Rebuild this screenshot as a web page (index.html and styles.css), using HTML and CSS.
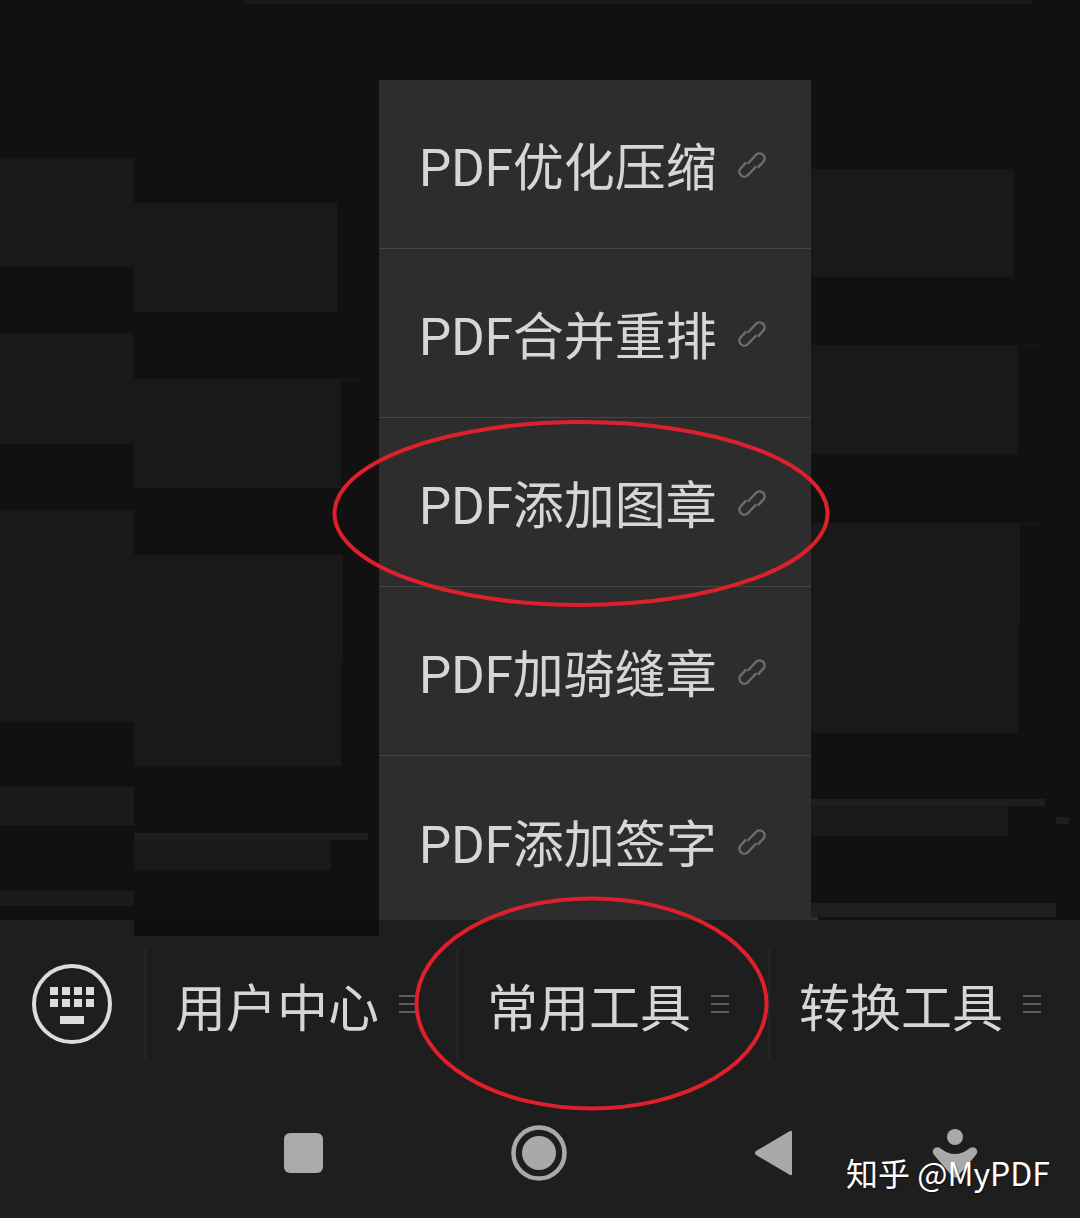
FILE: index.html
```html
<!DOCTYPE html>
<html lang="zh">
<head>
<meta charset="utf-8">
<title>MyPDF</title>
<link rel="stylesheet" href="styles.css">
</head>
<body>
<div class="screen">
  <main class="canvas">
    <svg class="ghost" width="1080" height="920" viewBox="0 0 1080 920" aria-hidden="true">
      <rect class="g" x="245" y="0" width="786" height="4"/>
      <rect class="g" x="0" y="158" width="134" height="109"/>
      <rect class="g" x="0" y="333" width="134" height="111"/>
      <rect class="g" x="0" y="510" width="134" height="212"/>
      <rect class="g2" x="0" y="787" width="134" height="38"/>
      <rect class="g2" x="0" y="891" width="134" height="15"/>
      <rect class="g" x="134" y="203" width="203" height="109"/>
      <rect class="g" x="134" y="379" width="207" height="109"/>
      <rect class="g" x="134" y="379" width="231" height="1"/>
      <rect class="g" x="134" y="555" width="209" height="105"/>
      <rect class="g" x="134" y="660" width="207" height="106"/>
      <rect class="g3" x="134" y="833" width="234" height="7"/>
      <rect class="g" x="134" y="840" width="197" height="30"/>
      <rect class="g" x="811" y="169" width="203" height="108"/>
      <rect class="g" x="811" y="345" width="207" height="109"/>
      <rect class="g" x="811" y="345" width="230" height="1"/>
      <rect class="g" x="811" y="523" width="209" height="105"/>
      <rect class="g" x="811" y="628" width="207" height="105"/>
      <rect class="g" x="811" y="523" width="234" height="1"/>
      <rect class="g3" x="811" y="799" width="234" height="7"/>
      <rect class="g" x="811" y="806" width="197" height="30"/>
      <rect class="g3" x="811" y="903" width="245" height="14"/>
      <rect class="g3" x="1056" y="817" width="13" height="7"/>
      <rect class="g4" x="811" y="917" width="7" height="3"/>
    </svg>
    <ul class="menu">
      <li class="menu-item"><span>PDF优化压缩</span><svg class="link" viewBox="0 0 28 28"><use href="#link-icon"/></svg></li>
      <li class="menu-item"><span>PDF合并重排</span><svg class="link" viewBox="0 0 28 28"><use href="#link-icon"/></svg></li>
      <li class="menu-item"><span>PDF添加图章</span><svg class="link" viewBox="0 0 28 28"><use href="#link-icon"/></svg></li>
      <li class="menu-item"><span>PDF加骑缝章</span><svg class="link" viewBox="0 0 28 28"><use href="#link-icon"/></svg></li>
      <li class="menu-item"><span>PDF添加签字</span><svg class="link" viewBox="0 0 28 28"><use href="#link-icon"/></svg></li>
    </ul>
  </main>
  <footer class="bar">
    <div class="shade"></div>
    <div class="tabs">
      <div class="kbd">
        <svg width="80" height="80" viewBox="0 0 80 80">
          <circle cx="40" cy="40" r="38" class="kbd-ring"/>
          <g class="kbd-keys">
            <rect x="18" y="23" width="8" height="8"/><rect x="30" y="23" width="8" height="8"/><rect x="42" y="23" width="8" height="8"/><rect x="54" y="23" width="8" height="8"/>
            <rect x="18" y="35" width="8" height="8"/><rect x="30" y="35" width="8" height="8"/><rect x="42" y="35" width="8" height="8"/><rect x="54" y="35" width="8" height="8"/>
            <rect x="28" y="52" width="24" height="8"/>
          </g>
        </svg>
      </div>
      <div class="tab"><span class="tab-label">用户中心</span><i class="burger"></i></div>
      <div class="tab"><span class="tab-label">常用工具</span><i class="burger"></i></div>
      <div class="tab"><span class="tab-label">转换工具</span><i class="burger"></i></div>
    </div>
    <nav class="nav">
      <i class="nav-square"></i>
      <svg class="nav-home" width="56" height="56" viewBox="0 0 56 56"><circle cx="28" cy="28" r="25.5" class="home-ring"/><circle cx="28" cy="28" r="17" class="nav-fill"/></svg>
      <svg class="nav-back" width="40" height="48" viewBox="0 0 40 48"><path class="nav-fill" d="M38 3 38 45Q38 47 36 46L2 26Q0 24 2 22L36 2Q38 1 38 3Z"/></svg>
    </nav>
    <svg class="person" width="46" height="50" viewBox="0 0 46 50"><circle cx="23" cy="8" r="8" class="nav-fill"/><path class="nav-fill" d="M1 21Q3 17 8 19Q23 31 38 19Q43 17 45 21Q46 24 43 27L26 47Q23 50 20 47L3 27Q0 24 1 21Z"/></svg>
    <div class="mark">知乎 @MyPDF</div>
  </footer>
  <svg class="ink" width="1080" height="1218" viewBox="0 0 1080 1218" aria-hidden="true">
    <ellipse cx="581" cy="513.5" rx="246.5" ry="91.5"/>
    <ellipse cx="591.5" cy="1003.5" rx="175" ry="105"/>
  </svg>
</div>
<div class="strip"></div>
<svg class="defs" width="0" height="0"><defs><g id="link-icon" transform="rotate(43 14 14)"><path d="M10 16V4a5 5 0 0 1 10 0V12"/><path d="M18 12V24a5 5 0 0 1-10 0V16"/></g></defs></svg>
</body>
</html>
```
FILE: styles.css
```css
* { box-sizing: border-box; }
html, body { margin: 0; padding: 0; background: #fff; }
body { width: 1080px; height: 1224px; overflow: hidden; font-family: Roboto, "Noto Sans CJK SC", sans-serif; }
.screen { position: relative; width: 1080px; height: 1218px; display: flex; flex-direction: column; background: #111; }
.canvas { position: relative; height: 920px; flex: none; }
.ghost { position: absolute; left: 0; top: 0; }
.g { fill: #191919; }
.g2 { fill: #1b1b1b; }
.g3 { fill: #1e1e1e; }
.g4 { fill: #2d2d2d; }
.menu { position: absolute; left: 379px; top: 80px; width: 432px; margin: 0; padding: 0; list-style: none; background: #2d2d2d; }
.menu-item { height: 169px; display: flex; align-items: center; padding: 10px 0 0 40px; border-bottom: 1px solid #474747; font-size: 51px; line-height: 60px; color: #d6d6d6; }
.menu-item:last-child { height: 164px; border-bottom: 0; padding-top: 16px; }
.link { width: 28px; height: 28px; margin: -8px 0 0 21px; fill: none; stroke: #6e6e6e; stroke-width: 2.4; overflow: visible; }
.bar { position: relative; flex: 1; background: #1e1e1e; }
.shade { position: absolute; left: 134px; top: 0; width: 245px; height: 16px; background: #0f0f0f; }
.tabs { display: flex; height: 170px; padding-top: 29px; align-items: flex-start; }
.kbd { width: 145px; height: 110px; display: flex; justify-content: center; padding: 15px 0 0 0; }
.kbd-ring { fill: none; stroke: #dcdcdc; stroke-width: 4; }
.kbd-keys rect { fill: #dcdcdc; }
.tab { width: 312px; height: 110px; padding: 0 0 0 29px; display: flex; align-items: center; border-left: 2px solid #262626; color: #d6d6d6; font-size: 51px; line-height: 60px; flex: none; }
.tab-label { display: block; padding-top: 11px; }
.burger { display: block; width: 18px; height: 18px; margin: 0 0 0 20px; border-top: 2px solid #5e5e5e; border-bottom: 2px solid #5e5e5e; position: relative; }
.burger::after { content: ""; position: absolute; left: 0; right: 0; top: 6px; height: 2px; background: #5e5e5e; }
.nav { display: flex; align-items: center; height: 126px; padding: 0 0 0 284px; }
.nav-square { display: block; width: 39px; height: 40px; border-radius: 6px; background: #aaa; }
.nav-home { margin-left: 188px; }
.nav-back { margin-left: 187px; }
.nav-fill { fill: #a9a9a9; }
.home-ring { fill: none; stroke: #a9a9a9; stroke-width: 4.5; }
.person { position: absolute; left: 932px; top: 209px; }
.mark { position: absolute; left: 846px; top: 229px; font-family: "Noto Sans CJK SC", sans-serif; font-size: 32px; line-height: 46px; color: #fff; white-space: nowrap; text-shadow: 1px 1px 1px rgba(0,0,0,.5); }
.ink { position: absolute; left: 0; top: 0; pointer-events: none; }
.ink ellipse { fill: none; stroke: #de202d; stroke-width: 4; }
.strip { height: 6px; background: #fff; }
.defs { position: absolute; }
```
